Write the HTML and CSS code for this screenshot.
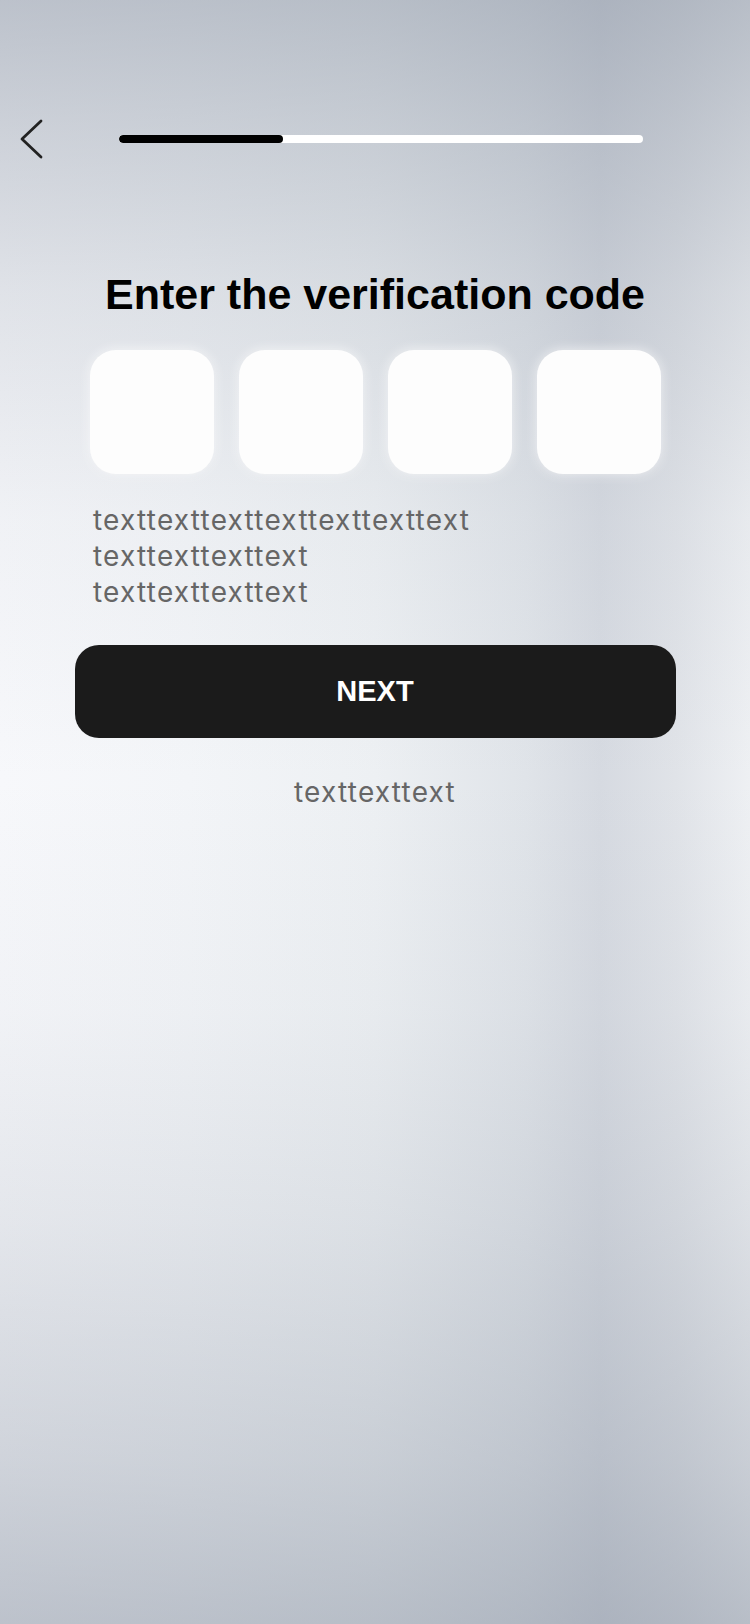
FILE: index.html
```html
<!DOCTYPE html>
<html lang="en">
<head>
<meta charset="utf-8">
<title>Verification</title>
<link rel="stylesheet" href="styles.css">
</head>
<body>
<div class="screen">
  <header class="topbar">
    <button class="back" aria-label="Back">
      <svg width="26" height="40" viewBox="0 0 26 40" fill="none">
        <path d="M23 2 L4 20 L23 38" stroke="#222" stroke-width="2.8" stroke-linecap="round" stroke-linejoin="round"/>
      </svg>
    </button>
    <div class="progress"><div class="progress-fill" style="width:164px"></div></div>
  </header>

  <h1 class="title">Enter the verification code</h1>

  <div class="code">
    <div class="cell"></div>
    <div class="cell"></div>
    <div class="cell"></div>
    <div class="cell"></div>
  </div>

  <p class="hint">texttexttexttexttexttexttext<br>texttexttexttext<br>texttexttexttext</p>

  <button class="next">NEXT</button>

  <p class="link">texttexttext</p>
</div>
</body>
</html>
```

FILE: styles.css
```css
html, body {
  margin: 0;
  padding: 0;
}
body {
  width: 750px;
  height: 1624px;
  overflow: hidden;
  font-family: "Liberation Sans", Arial, sans-serif;
}
.screen {
  width: 750px;
  height: 1624px;
  box-sizing: border-box;
  background:
    linear-gradient(to bottom,
      rgba(130,140,156,0.50) 0%,
      rgba(130,140,156,0.36) 8%,
      rgba(130,140,156,0.20) 18%,
      rgba(130,140,156,0.06) 32%,
      rgba(130,140,156,0.0) 48%,
      rgba(130,140,156,0.05) 62%,
      rgba(130,140,156,0.16) 75%,
      rgba(130,140,156,0.34) 90%,
      rgba(130,140,156,0.50) 100%),
    linear-gradient(to right,
      #f7f8fb 0%,
      #f3f5f8 25%,
      #edf0f3 50%,
      #e0e4e9 70%,
      #d6dae1 80%,
      #e0e3e8 90%,
      #eef0f3 100%);
  display: flex;
  flex-direction: column;
}
.topbar {
  display: flex;
  align-items: center;
  height: 44px;
  margin-top: 117px;
  padding-left: 18px;
}
.back {
  border: 0;
  background: none;
  padding: 0;
  width: 26px;
  height: 40px;
  display: flex;
}
.progress {
  margin-left: 75px;
  width: 524px;
  height: 8px;
  border-radius: 4px;
  background: #ffffff;
  overflow: hidden;
}
.progress-fill {
  height: 100%;
  background: #000;
  border-radius: 4px;
}
.title {
  margin: 108px 0 0;
  font-family: "Liberation Sans", Arial, sans-serif;
  font-weight: 700;
  font-size: 43px;
  line-height: 50px;
  color: #000;
  text-align: center;
}
.code {
  margin-top: 31px;
  display: flex;
  justify-content: center;
  gap: 25px;
}
.cell {
  width: 124px;
  height: 124px;
  border-radius: 26px;
  background: #fdfdfd;
  box-shadow: 0 0 12px rgba(255,255,255,0.75), 0 2px 8px rgba(60,70,90,0.03);
}
.hint {
  margin: 28px 0 0;
  padding-left: 93px;
  font-family: Inter, "Noto Sans", sans-serif;
  font-size: 28px;
  line-height: 36px;
  letter-spacing: 1.22px;
  color: #666;
}
.next {
  margin: 35px auto 0;
  width: 601px;
  height: 93px;
  border: 0;
  border-radius: 24px;
  background: #1b1b1b;
  color: #fff;
  font-family: "Liberation Sans", Arial, sans-serif;
  font-weight: 700;
  font-size: 29px;
  padding: 0;
}
.link {
  margin: 36px 0 0;
  text-align: center;
  font-family: Inter, "Noto Sans", sans-serif;
  font-size: 28px;
  line-height: 36px;
  letter-spacing: 1.22px;
  color: #666;
}
```
